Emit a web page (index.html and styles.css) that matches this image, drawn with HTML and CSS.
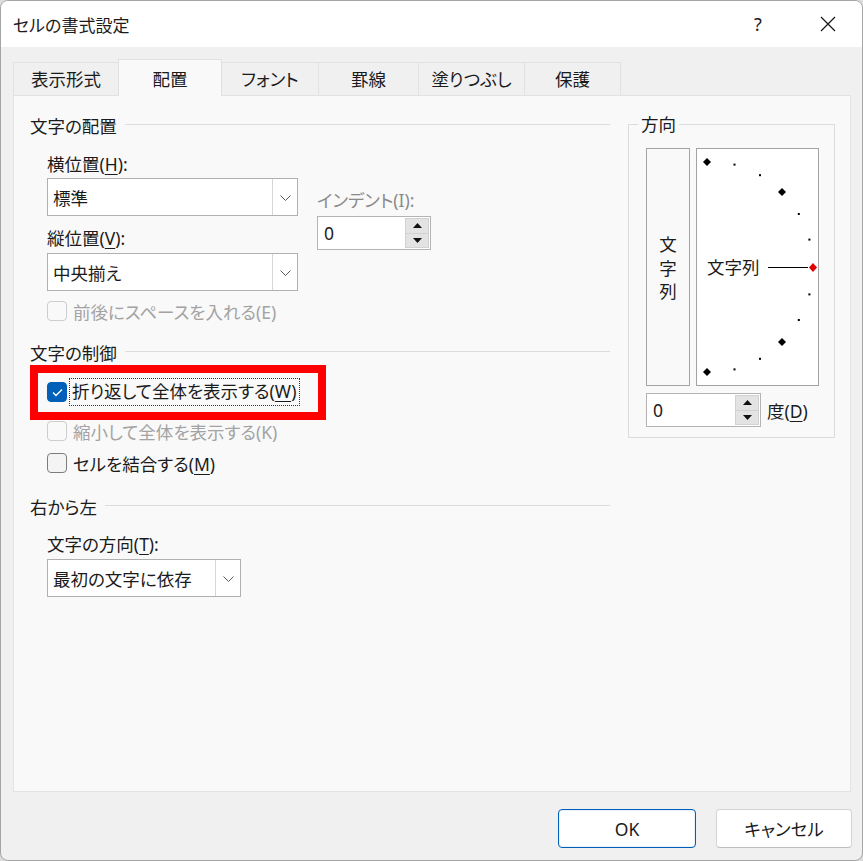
FILE: index.html
```html
<!DOCTYPE html>
<html lang="ja">
<head>
  <meta charset="UTF-8" />
  <title>セルの書式設定</title>
  <link rel="stylesheet" href="styles.css">
</head>
<body>

<div class="window">
  <div class="titlebar">
    <span class="title">セルの書式設定</span>
    <span class="tb-btn help">?</span>
    <span class="tb-btn close">
      <svg width="16" height="16" viewBox="0 0 16 16"><path d="M1 1L15 15M15 1L1 15" stroke="#1b1b1b" stroke-width="1.3" fill="none"/></svg>
    </span>
  </div>

  <div class="tabs">
    <div class="tab t1">表示形式</div>
    <div class="tab t2 active">配置</div>
    <div class="tab t3">フォント</div>
    <div class="tab t4">罫線</div>
    <div class="tab t5">塗りつぶし</div>
    <div class="tab t6">保護</div>
  </div>

  <div class="panel">
    <div class="left-col">
      <div class="group-head"><span>文字の配置</span><i></i></div>

      <div class="align-row">
        <div class="align-fields">
          <div class="label">横位置(<u>H</u>):</div>
          <div class="select sel-wide">
            <span class="sel-val">標準</span>
            <span class="sel-btn"><svg width="11" height="6" viewBox="0 0 11 6"><path d="M0.5 0.5L5.5 5.5L10.5 0.5" stroke="#5a5a5a" fill="none"/></svg></span>
          </div>
          <div class="label label-v">縦位置(<u>V</u>):</div>
          <div class="select sel-wide">
            <span class="sel-val">中央揃え</span>
            <span class="sel-btn"><svg width="11" height="6" viewBox="0 0 11 6"><path d="M0.5 0.5L5.5 5.5L10.5 0.5" stroke="#5a5a5a" fill="none"/></svg></span>
          </div>
        </div>
        <div class="indent">
          <div class="label muted">インデント(I):</div>
          <div class="spin spin-indent">
            <span class="spin-val">0</span>
            <span class="spin-btns">
              <span class="spin-b"><svg width="9" height="5" viewBox="0 0 9 5"><path d="M4.5 0L9 5H0Z" fill="#111"/></svg></span>
              <span class="spin-b"><svg width="9" height="5" viewBox="0 0 9 5"><path d="M0 0H9L4.5 5Z" fill="#111"/></svg></span>
            </span>
          </div>
        </div>
      </div>

      <div class="check disabled row-space">
        <span class="box"></span><span class="check-text">前後にスペースを入れる(E)</span>
      </div>

      <div class="group-head head-ctrl"><span>文字の制御</span><i></i></div>

      <div class="check row-wrap">
        <span class="box checked"><svg width="11" height="9" viewBox="0 0 11 9"><path d="M1 4.5L4 7.5L10 1.5" stroke="#fff" stroke-width="1.4" fill="none"/></svg></span>
        <span class="check-text focus">折り返して全体を表示する(<u>W</u>)</span>
      </div>
      <div class="check disabled row-shrink">
        <span class="box"></span><span class="check-text">縮小して全体を表示する(K)</span>
      </div>
      <div class="check row-merge">
        <span class="box"></span><span class="check-text">セルを結合する(<u>M</u>)</span>
      </div>

      <div class="group-head head-rtl"><span>右から左</span><i></i></div>
      <div class="label label-dir">文字の方向(<u>T</u>):</div>
      <div class="select sel-dir">
        <span class="sel-val">最初の文字に依存</span>
        <span class="sel-btn"><svg width="11" height="6" viewBox="0 0 11 6"><path d="M0.5 0.5L5.5 5.5L10.5 0.5" stroke="#5a5a5a" fill="none"/></svg></span>
      </div>
    </div>

    <fieldset class="orient">
      <legend>方向</legend>
      <div class="orient-row">
        <div class="vbox"><span class="vtext">文字列</span></div>
        <div class="semi">
          <svg width="121" height="236" viewBox="0 0 121 236">
            <g fill="#000">
              <path d="M10 9L14 13L10 17L6 13Z"/>
              <rect x="36.5" y="14.6" width="2" height="2"/>
              <rect x="62" y="25.2" width="2" height="2"/>
              <path d="M85 39L89 43L85 47L81 43Z"/>
              <rect x="100.8" y="64" width="2" height="2"/>
              <rect x="111.4" y="89.6" width="2" height="2"/>
              <rect x="111.4" y="144.4" width="2" height="2"/>
              <rect x="100.8" y="170" width="2" height="2"/>
              <path d="M85 189L89 193L85 197L81 193Z"/>
              <rect x="62" y="208.8" width="2" height="2"/>
              <rect x="36.5" y="219.4" width="2" height="2"/>
              <path d="M10 219L14 223L10 227L6 223Z"/>
            </g>
            <text x="10" y="125" class="semi-text">文字列</text>
            <line x1="71" y1="118.5" x2="111" y2="118.5" stroke="#000" stroke-width="1"/>
            <path d="M116 114L120 118.5L116 123L112 118.5Z" fill="#e00000"/>
          </svg>
        </div>
      </div>
      <div class="deg-row">
        <div class="spin spin-deg">
          <span class="spin-val">0</span>
          <span class="spin-btns">
            <span class="spin-b"><svg width="9" height="5" viewBox="0 0 9 5"><path d="M4.5 0L9 5H0Z" fill="#111"/></svg></span>
            <span class="spin-b"><svg width="9" height="5" viewBox="0 0 9 5"><path d="M0 0H9L4.5 5Z" fill="#111"/></svg></span>
          </span>
        </div>
        <span class="deg-label">度(<u>D</u>)</span>
      </div>
    </fieldset>
  </div>

  <div class="footer">
    <button class="btn btn-ok">OK</button>
    <button class="btn">キャンセル</button>
  </div>

  <div class="highlight"></div>
</div>

</body>
</html>
```

FILE: styles.css
```css
* {
  box-sizing: border-box;
}

html, body {
  margin: 0;
  height: 100%;
}

body {
  background: #dcdcdc;
  font-family: "Noto Sans", "Noto Sans CJK JP", sans-serif;
  font-size: 17.5px;
  color: #1b1b1b;
  font-feature-settings: "palt" 1;
}

u {
  text-decoration-thickness: 1px;
  text-underline-offset: 3px;
}

.window {
  position: relative;
  width: 863px;
  height: 861px;
  background: #f0f0f0;
  border: 1px solid #a5a5a5;
  border-radius: 8px;
  overflow: hidden;
}

.titlebar {
  height: 46px;
  background: #fff;
  display: flex;
  align-items: center;
  padding-left: 12px;
}

.title {
  flex: 1;
  font-size: 17px;
}

.tb-btn {
  width: 70px;
  height: 46px;
  display: flex;
  align-items: center;
  justify-content: center;
}

.help {
  font-size: 18px;
}

.close {
  margin-right: -1px;
}

/* tabs */
.tabs {
  display: flex;
  align-items: flex-end;
  height: 37px;
  margin-top: 12px;
  padding-left: 12px;
}

.tab {
  height: 34px;
  display: flex;
  align-items: center;
  justify-content: center;
  background: #f0f0f0;
  border: 1px solid #e2e2e2;
  border-right: none;
  padding-bottom: 1px;
}

.tab.t6 {
  border-right: 1px solid #e2e2e2;
}

.tab.active {
  position: relative;
  z-index: 1;
  height: 37px;
  background: #f9f9f9;
  border-color: #e0e0e0;
  border-bottom: none;
  border-right: 1px solid #e0e0e0;
  padding-bottom: 0;
}

.tab.active + .tab {
  border-left: none;
}

.t1 { width: 105px; }
.t2 { width: 104px; }
.t3 { width: 96px; }
.t4 { width: 100px; }
.t5 { width: 106px; }
.t6 { width: 97px; }

/* panel */
.panel {
  margin: -1px 11px 0 12px;
  height: 697px;
  background: #f9f9f9;
  border: 1px solid #e3e3e3;
  display: flex;
  align-items: flex-start;
  gap: 18px;
  padding: 18px 15px 0 16px;
}

.left-col {
  width: 580px;
}

.group-head {
  display: flex;
  align-items: center;
  line-height: 24px;
}

.group-head i {
  flex: 1;
  height: 1px;
  margin: 0 0 3px 8px;
  background: #dcdcdc;
}

.label {
  line-height: 24px;
}

.muted {
  color: #8a8a8a;
}

.align-row {
  display: flex;
  gap: 19px;
  padding-left: 17px;
  margin-top: 14px;
}

.align-fields .select {
  margin-top: 2px;
}

.label-v {
  margin-top: 10px;
}

.align-fields .label-v + .select {
  margin-top: 3px;
}

.indent {
  margin-top: 36px;
}

.indent .spin {
  margin-top: 4px;
}

/* select */
.select {
  display: flex;
  height: 38px;
  background: #fff;
  border: 1px solid #b0b0b0;
}

.sel-wide {
  width: 251px;
}

.sel-val {
  flex: 1;
  display: flex;
  align-items: center;
  padding-left: 5px;
}

.sel-btn {
  width: 25px;
  display: flex;
  align-items: center;
  justify-content: center;
  border-left: 1px solid #d6d6d6;
  padding-top: 1px;
}

.label-dir {
  margin: 13px 0 0 17px;
}

.sel-dir {
  width: 194px;
  margin: 3px 0 0 17px;
}

/* spinner */
.spin {
  display: flex;
  height: 34px;
  background: #fff;
  border: 1px solid #b4b4b4;
}

.spin-indent {
  width: 114px;
}

.spin-deg {
  width: 115px;
  height: 34px;
}

.spin-val {
  flex: 1;
  display: flex;
  align-items: center;
  padding-left: 6px;
}

.spin-btns {
  width: 25px;
  display: flex;
  flex-direction: column;
  padding: 1px 1px 1px 0;
}

.spin-b {
  flex: 1;
  display: flex;
  align-items: center;
  justify-content: center;
  background: #e3e3e3;
  border: 1px solid #d2d2d2;
}

.spin-b + .spin-b {
  border-top: none;
}

/* checkboxes */
.check {
  display: flex;
  align-items: center;
  height: 24px;
  padding-left: 17px;
}

.box {
  width: 20px;
  height: 20px;
  border: 1px solid #7d7d7d;
  border-radius: 4px;
  background: #f4f4f4;
  margin-right: 6px;
  display: flex;
  align-items: center;
  justify-content: center;
}

.box.checked {
  background: #005fb8;
  border-color: #005fb8;
}

.check.disabled {
  color: #a3a3a3;
}

.check.disabled .box {
  border-color: #cdcdcd;
  background: transparent;
}

.check-text.focus {
  outline: 1px dotted #333;
  padding: 0 3px 1px 2px;
  margin-left: -3px;
  line-height: 25px;
}

.row-space {
  margin-top: 8px;
}

.head-ctrl {
  margin-top: 18px;
}

.row-wrap {
  margin-top: 15px;
}

.row-shrink {
  margin-top: 15px;
}

.row-merge {
  margin-top: 8px;
}

.head-rtl {
  margin-top: 20px;
}

/* orientation */
.orient {
  width: 207px;
  margin: -2px 0 0;
  padding: 12px 14px 10px 17px;
  border: 1px solid #dcdcdc;
}

.orient legend {
  padding: 0 3px;
  margin-left: -8px;
  line-height: 24px;
}

.orient-row {
  display: flex;
  gap: 6px;
}

.vbox {
  width: 44px;
  height: 238px;
  border: 1px solid #a3a3a3;
  display: flex;
  align-items: center;
  justify-content: center;
}

.vtext {
  writing-mode: vertical-rl;
  font-feature-settings: normal;
  letter-spacing: 6px;
  margin-top: 9px;
}

.semi {
  width: 123px;
  height: 238px;
  background: #fff;
  border: 1px solid #a3a3a3;
}

.semi svg {
  display: block;
}

.semi-text {
  font-family: "Noto Sans CJK JP", sans-serif;
  font-size: 17.5px;
  fill: #1b1b1b;
}

.deg-row {
  display: flex;
  align-items: center;
  margin-top: 7px;
}

.deg-label {
  margin-left: 6px;
}

/* footer */
.footer {
  display: flex;
  justify-content: flex-end;
  gap: 20px;
  padding: 17px 10px 0 0;
}

.btn {
  width: 136px;
  height: 39px;
  background: #fff;
  border: 1px solid #d3d3d3;
  border-bottom-color: #bdbdbd;
  border-radius: 4px;
  font-family: "Noto Sans", "Noto Sans CJK JP", sans-serif;
  font-size: 17.5px;
  color: #1b1b1b;
  font-feature-settings: "palt" 1;
  padding: 0;
}

.btn-ok {
  width: 138px;
  border: 1px solid #005fb8;
  box-shadow: inset 0 0 0 1px #e8f0fa;
}

/* red annotation frame */
.highlight {
  position: absolute;
  left: 29px;
  top: 364px;
  width: 296px;
  height: 55px;
  border: 8px solid #ff0000;
}
```
